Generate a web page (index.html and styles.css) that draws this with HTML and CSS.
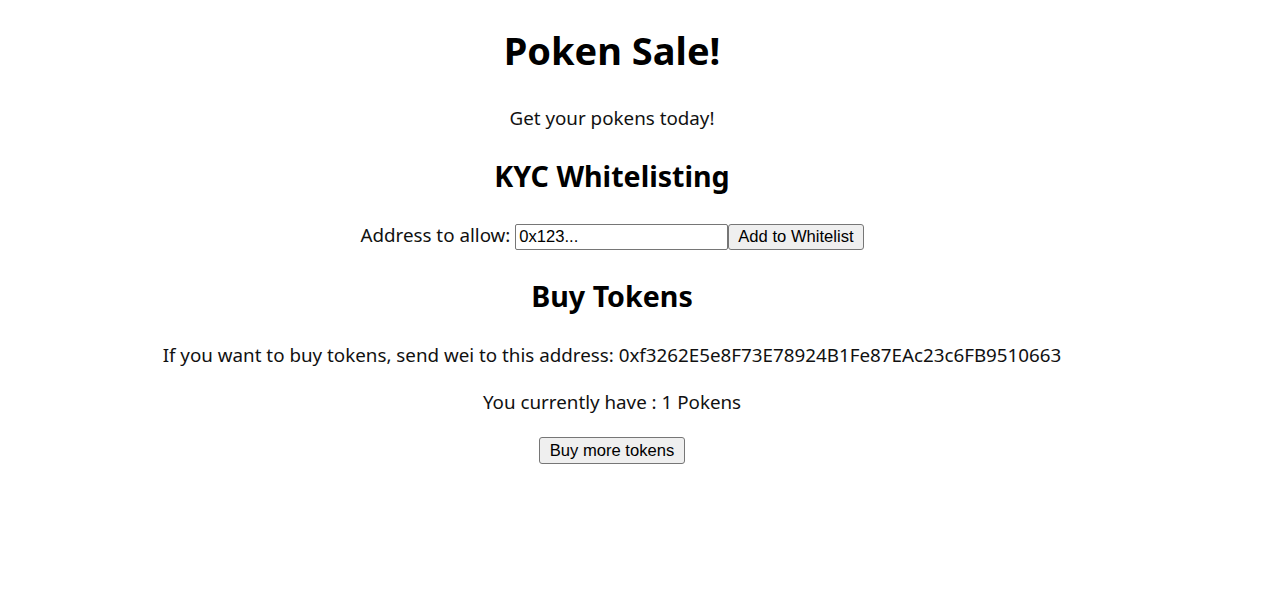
FILE: index.html
```html
<!DOCTYPE html>
<html>
<head>
<meta charset="utf-8">
<title>Poken Sale</title>
<link rel="stylesheet" href="styles.css">
</head>
<body>
<div class="app">
  <h1 class="title">Poken Sale!</h1>
  <p class="text">Get your pokens today!</p>
  <h2 class="subtitle">KYC Whitelisting</h2>
  <div class="row">Address to allow: <input class="field" type="text" name="kycAddress" value="0x123..."><button class="btn">Add to Whitelist</button></div>
  <h2 class="subtitle">Buy Tokens</h2>
  <p class="text">If you want to buy tokens, send wei to this address: 0xf3262E5e8F73E78924B1Fe87EAc23c6FB9510663</p>
  <p class="text">You currently have : 1 Pokens</p>
  <button class="btn btn-buy" type="button">Buy more tokens</button>
</div>
</body>
</html>
```

FILE: styles.css
```css
html, body {
  background: #ffffff;
}
body {
  margin: 0;
  font-family: "Noto Sans", "Open Sans", sans-serif;
  font-size: 18.8px;
  color: #111;
}
.app {
  width: 1224px;
  text-align: center;
}
.title {
  font-size: 38px;
  font-weight: 700;
  line-height: 53px;
  margin: 24px 0 28px;
  color: #000;
}
.subtitle {
  font-size: 28.6px;
  font-weight: 700;
  line-height: 40px;
  margin: 24px 0 26px;
  color: #000;
}
.text {
  line-height: 27px;
  margin: 20px 0;
}
.row {
  line-height: 27px;
  margin-bottom: 26px;
}
.field {
  box-sizing: border-box;
  width: 213px;
  height: 26px;
  font-family: "Liberation Sans", Arial, sans-serif;
  font-size: 16.6px;
  padding: 1px 3px;
  margin: 0;
  border: 1px solid #767676;
  border-radius: 2px;
  vertical-align: middle;
  color: #000;
}
.btn {
  box-sizing: border-box;
  height: 26px;
  font-family: "Liberation Sans", Arial, sans-serif;
  font-size: 16.6px;
  padding: 1px 9px;
  margin: 0;
  background: #efefef;
  border: 1px solid #767676;
  border-radius: 3px;
  color: #000;
  vertical-align: middle;
}
.btn-buy {
  height: 27px;
  padding: 1px 10px;
}
```
